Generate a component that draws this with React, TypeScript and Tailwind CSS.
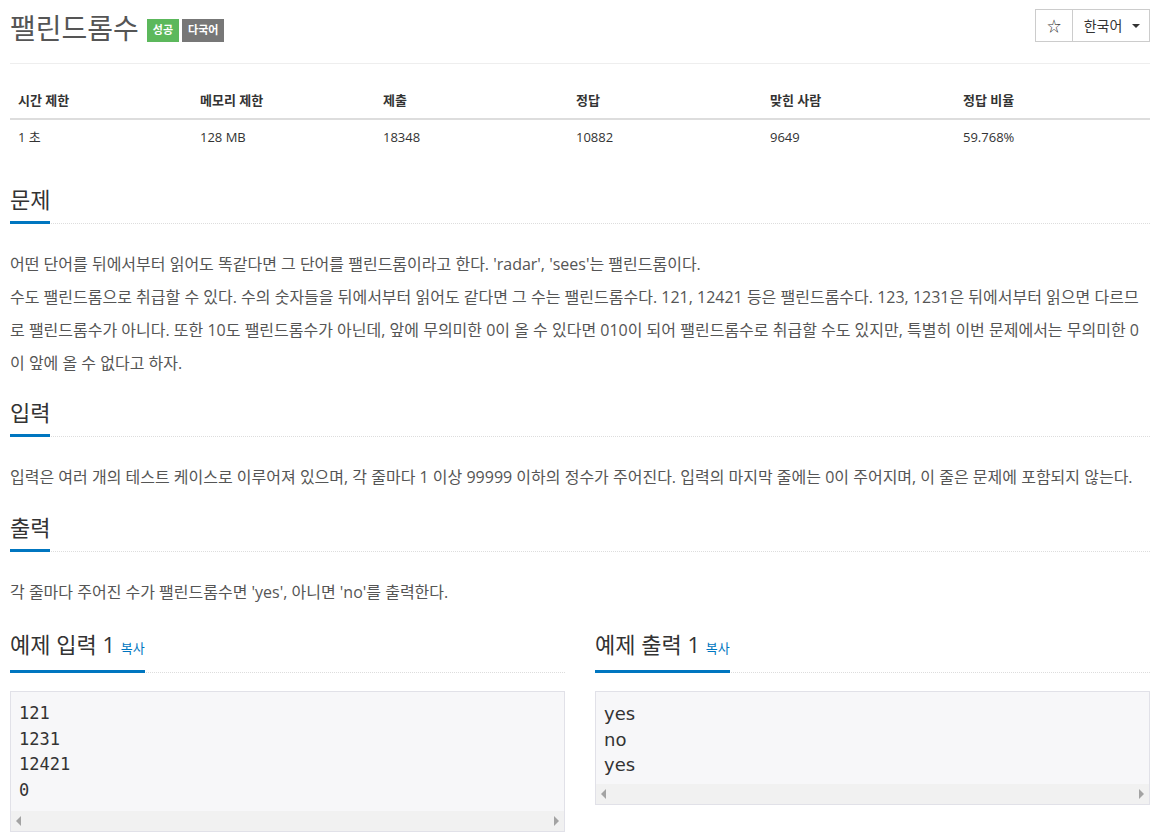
import React from 'react';

const font = { fontFamily: '"Open Sans", "Noto Sans CJK KR", sans-serif' };

const stats = [
  { label: '시간 제한', value: '1 초', w: 'w-[182px]' },
  { label: '메모리 제한', value: '128 MB', w: 'w-[183px]' },
  { label: '제출', value: '18348', w: 'w-[193px]' },
  { label: '정답', value: '10882', w: 'w-[194px]' },
  { label: '맞힌 사람', value: '9649', w: 'w-[193px]' },
  { label: '정답 비율', value: '59.768%', w: 'flex-1' },
];

function Heading({ children }: { children: React.ReactNode }) {
  return (
    <div className="border-b border-dotted border-[#ddd]">
      <h2 className="inline-block -mb-px border-b-[3px] border-[#0076c0] pb-[7px] text-[22px] leading-[30px] text-[#333]">
        {children}
      </h2>
    </div>
  );
}

function ScrollBar() {
  return (
    <div className="flex h-[20px] items-center justify-between bg-[#f1f1f1] px-[5px]">
      <span className="h-0 w-0 border-y-[5px] border-r-[5px] border-y-transparent border-r-[#a3a3a3]" />
      <span className="h-0 w-0 border-y-[5px] border-l-[5px] border-y-transparent border-l-[#a3a3a3]" />
    </div>
  );
}

function Sample({ title, lines, mono }: { title: string; lines: string[]; mono: boolean }) {
  return (
    <div className="flex-1">
      <Heading>
        {title} <span className="text-[13px] text-[#0076c0]">복사</span>
      </Heading>
      <div className="mt-[18px] border border-[#e1e1e8] bg-[#f7f7f9]">
        <div
          className={mono ? 'px-[8px] pt-[9px] pb-[7px] text-[17px] leading-[25.7px] text-[#333]' : 'px-[8px] pt-[9px] pb-[6px] text-[18px] leading-[25.7px] text-[#333]'}
          style={{ fontFamily: mono ? '"DejaVu Sans Mono", monospace' : '"DejaVu Sans", sans-serif' }}
        >
          {lines.map((l, i) => (
            <div key={i}>{l}</div>
          ))}
        </div>
        <ScrollBar />
      </div>
    </div>
  );
}

export default function App() {
  return (
    <div className="min-h-screen bg-white px-[10px]" style={font}>
      {/* header */}
      <div className="flex h-[64px] items-start justify-between border-b border-[#eee]">
        <div className="mt-[8px] flex items-center gap-[8px]">
          <h1 className="text-[28px] leading-[40px] text-[#555]">팰린드롬수</h1>
          <div className="flex gap-[3px] pt-[4px]">
            <span className="flex h-[23px] items-center bg-[#5cb85c] px-[6px] text-[11px] font-bold text-white">성공</span>
            <span className="flex h-[23px] items-center bg-[#777] px-[6px] text-[11px] font-bold text-white">다국어</span>
          </div>
        </div>
        <div className="mt-[9px] flex h-[33px] border border-[#ccc] text-[14px] text-[#333]">
          <button className="flex w-[37px] items-center justify-center border-r border-[#ccc]">☆</button>
          <button className="flex w-[76px] items-center justify-center gap-[10px] pl-[2px]">
            한국어
            <span className="h-0 w-0 border-x-[4px] border-t-[4px] border-x-transparent border-t-[#333]" />
          </button>
        </div>
      </div>

      {/* stats table */}
      <div className="mt-[19px] text-[13px] text-[#333]">
        <div className="flex border-b-2 border-[#ddd] font-bold">
          {stats.map((s) => (
            <div key={s.label} className={`${s.w} px-[8px] py-[8px] leading-[19px]`}>
              {s.label}
            </div>
          ))}
        </div>
        <div className="flex">
          {stats.map((s) => (
            <div key={s.label} className={`${s.w} px-[8px] py-[8px] leading-[19px]`}>
              {s.value}
            </div>
          ))}
        </div>
      </div>

      <div className="mt-[29px]">
        <Heading>문제</Heading>
        <div className="mt-[24px] text-[16px] leading-[33px] text-[#555]">
          <p>어떤 단어를 뒤에서부터 읽어도 똑같다면 그 단어를 팰린드롬이라고 한다. 'radar', 'sees'는 팰린드롬이다.</p>
          <p>
            수도 팰린드롬으로 취급할 수 있다. 수의 숫자들을 뒤에서부터 읽어도 같다면 그 수는 팰린드롬수다. 121, 12421 등은 팰린드롬수다. 123, 1231은 뒤에서부터 읽으면 다르므로 팰린드롬수가 아니다. 또한 10도 팰린드롬수가 아닌데, 앞에 무의미한 0이 올 수 있다면 010이 되어 팰린드롬수로 취급할 수도 있지만, 특별히 이번 문제에서는 무의미한 0이 앞에 올 수 없다고 하자.
          </p>
        </div>
      </div>

      <div className="mt-[17px]">
        <Heading>입력</Heading>
        <div className="mt-[24px] text-[16px] leading-[33px] text-[#555]">
          <p>입력은 여러 개의 테스트 케이스로 이루어져 있으며, 각 줄마다 1 이상 99999 이하의 정수가 주어진다. 입력의 마지막 줄에는 0이 주어지며, 이 줄은 문제에 포함되지 않는다.</p>
        </div>
      </div>

      <div className="mt-[18px]">
        <Heading>출력</Heading>
        <div className="mt-[24px] text-[16px] leading-[33px] text-[#555]">
          <p>각 줄마다 주어진 수가 팰린드롬수면 'yes', 아니면 'no'를 출력한다.</p>
        </div>
      </div>

      <div className="mt-[20px] flex gap-[30px]">
        <Sample title="예제 입력 1" lines={['121', '1231', '12421', '0']} mono />
        <Sample title="예제 출력 1" lines={['yes', 'no', 'yes']} mono={false} />
      </div>
    </div>
  );
}
